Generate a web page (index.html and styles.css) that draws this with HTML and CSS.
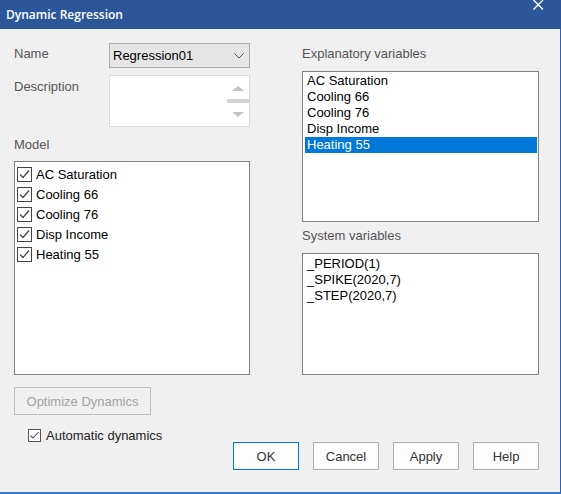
FILE: index.html
```html
<!DOCTYPE html>
<html>
<head>
<meta charset="utf-8">
<link rel="stylesheet" href="styles.css">
</head>
<body>
<div class="window">
  <div class="titlebar">
    <span class="title">Dynamic Regression</span>
    <svg class="close" width="11" height="10" viewBox="0 0 11 10"><path d="M0.5 0 L10 9.5 M10 0 L0.5 9.5" stroke="#fff" stroke-width="1.4" fill="none"/></svg>
  </div>
  <div class="client">
    <div class="columns">
      <div class="col col-left">
        <div class="field field-name">
          <span class="lbl lbl-name">Name</span>
          <div class="combo">
            <span class="combo-text">Regression01</span>
            <svg class="chevron" width="10" height="6" viewBox="0 0 10 6"><polyline points="0.5,0.5 5,5 9.5,0.5" stroke="#555" stroke-width="1" fill="none"/></svg>
          </div>
        </div>
        <div class="field field-desc">
          <span class="lbl lbl-desc">Description</span>
          <div class="memo">
            <div class="vscroll">
              <svg class="arrow arrow-up" width="12" height="5" viewBox="0 0 12 5"><polygon points="6,0 12,5 0,5" fill="#c2c2c2"/></svg>
              <div class="thumb"></div>
              <svg class="arrow arrow-down" width="12" height="5" viewBox="0 0 12 5"><polygon points="0,0 12,0 6,5" fill="#c2c2c2"/></svg>
            </div>
          </div>
        </div>
        <div class="lbl lbl-model">Model</div>
        <div class="listbox model-list">
          <div class="check-row"><svg class="cb" width="15" height="15" viewBox="0 0 15 15"><rect x="0.5" y="0.5" width="14" height="14" fill="#fff" stroke="#444"/><polyline points="3,7.5 6,10.5 12,3.5" stroke="#444" stroke-width="1.2" fill="none"/></svg><span>AC Saturation</span></div>
          <div class="check-row"><svg class="cb" width="15" height="15" viewBox="0 0 15 15"><rect x="0.5" y="0.5" width="14" height="14" fill="#fff" stroke="#444"/><polyline points="3,7.5 6,10.5 12,3.5" stroke="#444" stroke-width="1.2" fill="none"/></svg><span>Cooling 66</span></div>
          <div class="check-row"><svg class="cb" width="15" height="15" viewBox="0 0 15 15"><rect x="0.5" y="0.5" width="14" height="14" fill="#fff" stroke="#444"/><polyline points="3,7.5 6,10.5 12,3.5" stroke="#444" stroke-width="1.2" fill="none"/></svg><span>Cooling 76</span></div>
          <div class="check-row"><svg class="cb" width="15" height="15" viewBox="0 0 15 15"><rect x="0.5" y="0.5" width="14" height="14" fill="#fff" stroke="#444"/><polyline points="3,7.5 6,10.5 12,3.5" stroke="#444" stroke-width="1.2" fill="none"/></svg><span>Disp Income</span></div>
          <div class="check-row"><svg class="cb" width="15" height="15" viewBox="0 0 15 15"><rect x="0.5" y="0.5" width="14" height="14" fill="#fff" stroke="#444"/><polyline points="3,7.5 6,10.5 12,3.5" stroke="#444" stroke-width="1.2" fill="none"/></svg><span>Heating 55</span></div>
        </div>
      </div>
      <div class="col col-right">
        <div class="lbl lbl-expl">Explanatory variables</div>
        <div class="listbox expl-list">
          <div class="item">AC Saturation</div>
          <div class="item">Cooling 66</div>
          <div class="item">Cooling 76</div>
          <div class="item">Disp Income</div>
          <div class="item selected">Heating 55</div>
        </div>
        <div class="lbl lbl-sys">System variables</div>
        <div class="listbox sys-list">
          <div class="item">_PERIOD(1)</div>
          <div class="item">_SPIKE(2020,7)</div>
          <div class="item">_STEP(2020,7)</div>
        </div>
      </div>
    </div>
    <button class="btn btn-disabled optimize">Optimize Dynamics</button>
    <div class="auto">
      <svg class="cb-small" width="13" height="13" viewBox="0 0 13 13"><rect x="0.5" y="0.5" width="12" height="12" fill="#fff" stroke="#555"/><polyline points="2.5,6.5 5,9 10.5,3" stroke="#555" stroke-width="1.1" fill="none"/></svg>
      <span>Automatic dynamics</span>
    </div>
    <div class="actions">
      <button class="btn btn-default">OK</button>
      <button class="btn">Cancel</button>
      <button class="btn">Apply</button>
      <button class="btn">Help</button>
    </div>
  </div>
</div>
</body>
</html>
```
FILE: styles.css
```css
* { box-sizing: border-box; }
html, body { margin: 0; padding: 0; }
body {
  width: 561px;
  height: 494px;
  overflow: hidden;
  font-family: "Liberation Sans", Arial, sans-serif;
  font-size: 13px;
  line-height: 15px;
  color: #000;
}
.window {
  width: 561px;
  height: 494px;
  display: flex;
  flex-direction: column;
}
.titlebar {
  height: 29px;
  flex: none;
  background: #2b579a;
  display: flex;
  align-items: center;
  justify-content: space-between;
  padding-left: 6px;
}
.title {
  font-family: "Open Sans", "Noto Sans", sans-serif;
  font-size: 12px;
  font-weight: 600;
  color: #fff;
  line-height: 16px;
}
.close {
  align-self: flex-start;
  margin-right: 17px;
  margin-top: 0;
}
.client {
  flex: 1;
  background: #f0f0f0;
  border-right: 1px solid #2f62ad;
  border-bottom: 2px solid #3a78cc;
  padding-left: 14px;
  padding-right: 21px;
  display: flex;
  flex-direction: column;
  align-items: flex-start;
}
.columns {
  display: grid;
  grid-template-columns: 236px 237px;
  column-gap: 52px;
}
.col { display: flex; flex-direction: column; }
.lbl { color: #555; }
.field { display: flex; }
.field .lbl { width: 95px; flex: none; }
.field-name { margin-top: 14px; }
.lbl-name { margin-top: 3px; }
.combo {
  width: 141px;
  height: 25px;
  background: #e5e5e5;
  border: 1px solid #adadad;
  display: flex;
  align-items: center;
  justify-content: space-between;
  padding-left: 3px;
  padding-right: 5px;
  color: #000;
}
.combo-text { line-height: 15px; }
.field-desc { margin-top: 7px; }
.lbl-desc { margin-top: 4px; }
.memo {
  width: 141px;
  height: 52px;
  background: #fff;
  border: 1px solid #dadada;
  display: flex;
  justify-content: flex-end;
}
.vscroll {
  width: 22px;
  display: flex;
  flex-direction: column;
  align-items: center;
  padding-top: 10px;
}
.arrow { display: block; flex: none; }
.thumb {
  width: 22px;
  height: 4px;
  background: #d4d4d4;
  margin-top: 8px;
}
.arrow-down { margin-top: 9px; }
.lbl-model { margin-top: 10px; }
.listbox {
  background: #fff;
  border: 1px solid #828282;
}
.model-list {
  margin-top: 9px;
  height: 214px;
  padding: 2px 2px;
}
.check-row {
  display: flex;
  align-items: center;
  height: 20px;
}
.cb { display: block; flex: none; margin-right: 4px; }
.lbl-expl { margin-top: 17px; }
.expl-list {
  margin-top: 10px;
  height: 151px;
  padding: 1px 1px 1px 2px;
}
.item {
  height: 16px;
  line-height: 16px;
  padding-left: 2px;
}
.item.selected {
  background: #0078d7;
  color: #fff;
}
.lbl-sys { margin-top: 6px; }
.sys-list {
  margin-top: 10px;
  height: 122px;
  padding: 2px 1px 1px 2px;
}
.btn {
  font-family: "Liberation Sans", Arial, sans-serif;
  font-size: 13px;
  color: #333;
  background: #fdfdfd;
  border: 1px solid #adadad;
  width: 66px;
  height: 28px;
  padding: 0;
}
.btn-default { border: 1px solid #0078d7; }
.btn-disabled {
  color: #a2a2a2;
  border-color: #bfbfbf;
  background: #f0f0f0;
}
.optimize {
  margin-top: 12px;
  width: 137px;
}
.auto {
  margin-top: 14px;
  margin-left: 14px;
  display: flex;
  align-items: center;
  height: 13px;
  color: #222;
}
.cb-small { display: block; flex: none; margin-right: 5px; }
.actions {
  align-self: flex-end;
  display: flex;
  gap: 14px;
}
```
